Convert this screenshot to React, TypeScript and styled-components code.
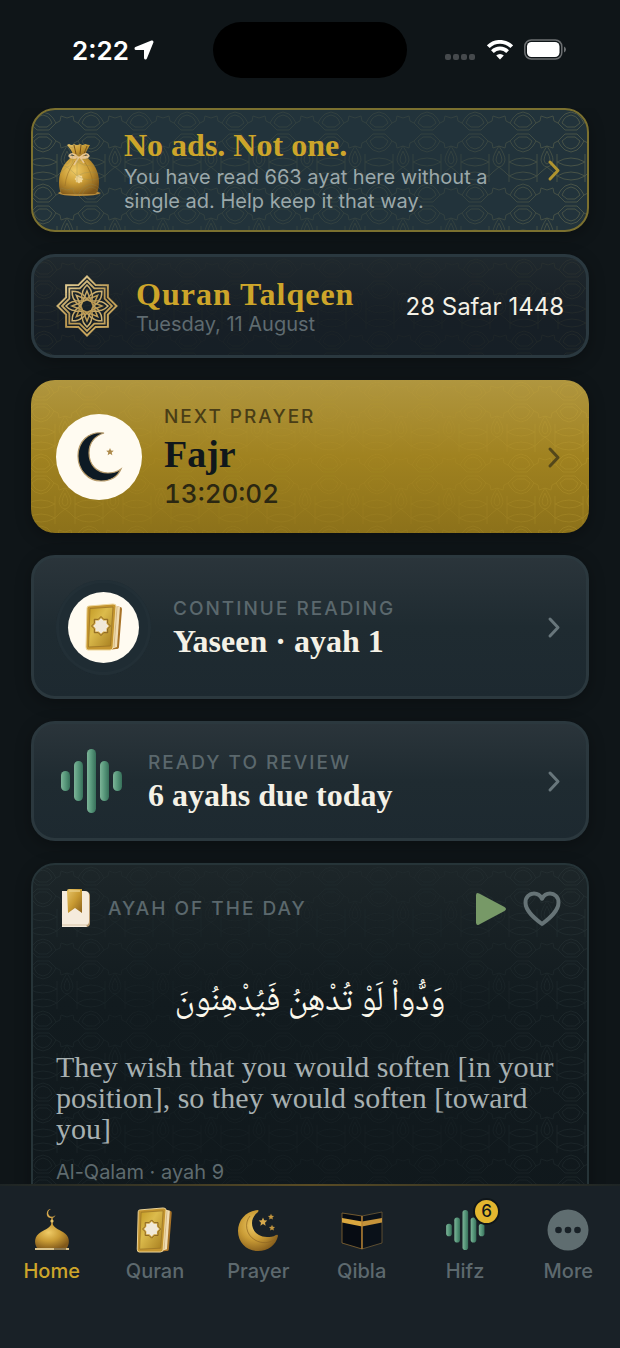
import React, { useId, useState } from 'react';
import styled, { createGlobalStyle } from 'styled-components';

const GlobalStyle = createGlobalStyle`
  * {
    box-sizing: border-box;
  }

  body {
    margin: 0;
    background: #0f1518;
    color: #f4f1e6;
    font-family: Inter, Roboto, sans-serif;
  }

  button {
    font: inherit;
    color: inherit;
    border: 0;
    padding: 0;
    background: none;
    cursor: pointer;
  }

  h1, h2, p {
    margin: 0;
  }
`;

const serif = '"Liberation Serif", "Times New Roman", serif';

const Screen = styled.div`
  display: flex;
  flex-direction: column;
  height: 100vh;
`;

const StatusBar = styled.header`
  display: grid;
  grid-template-columns: 1fr auto 1fr;
  align-items: center;
  padding: 22px 54px 30px;
  flex-shrink: 0;
`;

const Island = styled.div`
  width: 194px;
  height: 56px;
  border-radius: 28px;
  background: #000;
`;

const Clock = styled.div`
  display: flex;
  align-items: center;
  gap: 4px;
  padding-left: 18px;
  color: #fff;
  font-size: 26px;
  font-weight: 600;
`;

const StatusIcons = styled.div`
  display: flex;
  align-items: center;
  justify-content: flex-end;
  gap: 11px;
`;

const Feed = styled.main`
  flex: 1;
  min-height: 0;
  display: flex;
  flex-direction: column;
  gap: 22px;
  padding: 0 31px;
  overflow-y: auto;
  scrollbar-width: none;
`;

type Tone = 'promo' | 'brand' | 'gold' | 'slate' | 'verse';

const tones: Record<Tone, { border: number; line: string; fill: string }> = {
  promo: { border: 2, line: '#7b702f', fill: '#22333b' },
  brand: { border: 3, line: '#2a383f', fill: 'linear-gradient(#20292e, #171f26 60%, #161f26)' },
  gold: { border: 0, line: 'transparent', fill: 'linear-gradient(#b0963f, #a08220 50%, #8c711a)' },
  slate: { border: 3, line: '#2b383e', fill: 'linear-gradient(#2b353b, #1f2b31 50%, #1d2930)' },
  verse: { border: 2, line: '#263438', fill: 'linear-gradient(#1d2629, #121b1f 40%, #10181c)' },
};

const Card = styled.section<{ $tone: Tone; $height: number }>`
  position: relative;
  flex-shrink: 0;
  display: flex;
  align-items: center;
  min-height: ${(p) => p.$height}px;
  padding: 0 ${(p) => 25 - tones[p.$tone].border}px;
  border: ${(p) => tones[p.$tone].border}px solid ${(p) => tones[p.$tone].line};
  border-radius: 24px;
  background: ${(p) => tones[p.$tone].fill};
  background-origin: border-box;
  overflow: hidden;
  box-shadow: 0 4px 16px rgba(0, 0, 0, 0.3);
`;

const CardButton = styled(Card).attrs({ as: 'button' })`
  width: 100%;
  text-align: left;
`;

const VerseCard = styled(Card)`
  display: block;
  padding-top: 22px;
  padding-bottom: 24px;
`;

const PatternLayer = styled.svg<{ $strength: number }>`
  position: absolute;
  inset: 0;
  width: 100%;
  height: 100%;
  opacity: ${(p) => p.$strength};
  pointer-events: none;
  mask-image: linear-gradient(90deg, rgba(0, 0, 0, 0.9), rgba(0, 0, 0, 0.4) 20%, rgba(0, 0, 0, 0.4) 75%, #000);
`;

const Body = styled.div<{ $gap: number }>`
  position: relative;
  flex: 1;
  min-width: 0;
  margin-left: ${(p) => p.$gap}px;
`;

const Title = styled.h2<{ $gold?: boolean; $wide?: boolean }>`
  font-family: ${serif};
  font-size: 32px;
  line-height: 36px;
  font-weight: 700;
  color: ${(p) => (p.$gold ? '#cda52a' : '#f4f1e6')};
  letter-spacing: ${(p) => (p.$wide ? '1px' : 'normal')};
`;

const Text = styled.p`
  margin-top: 2px;
  font-size: 20px;
  line-height: 24px;
  color: #9ba8aa;
`;

const DateText = styled.p`
  font-size: 20px;
  line-height: 24px;
  color: #5f6b70;
`;

const HijriDate = styled.p`
  position: relative;
  font-size: 24px;
  color: #f4f1e6;
`;

const Label = styled.p<{ $dark?: boolean }>`
  font-size: 19px;
  line-height: 28px;
  font-weight: 500;
  letter-spacing: 2px;
  text-transform: uppercase;
  color: ${(p) => (p.$dark ? '#493d16' : '#5b686d')};
`;

const PrayerName = styled.h2`
  font-family: ${serif};
  font-size: 38px;
  line-height: 46px;
  color: #10171b;
`;

const Countdown = styled.p`
  font-size: 26px;
  line-height: 34px;
  font-weight: 500;
  color: #2b2712;
  font-variant-numeric: tabular-nums;
`;

const Disc = styled.div<{ $size: number }>`
  position: relative;
  display: flex;
  align-items: center;
  justify-content: center;
  width: ${(p) => p.$size}px;
  height: ${(p) => p.$size}px;
  border-radius: 50%;
  background: #fffbf1;
`;

const Ring = styled.div`
  padding: 12px;
  border-radius: 50%;
  background: #1f2c33;
  box-shadow: inset 0 0 0 3px #222f36;
`;

const VerseHeader = styled.div`
  position: relative;
  display: flex;
  align-items: center;
  height: 44px;

  p {
    flex: 1;
    margin-left: 14px;
  }
`;

const IconButton = styled.button`
  display: flex;
  align-items: center;
  justify-content: center;
  width: 44px;
  height: 44px;

  & + & {
    margin-left: 7px;
  }
`;

const Arabic = styled.p`
  position: relative;
  margin: 34px 0 10px;
  font-family: "Noto Naskh Arabic", Amiri, "Scheherazade New", "DejaVu Sans", sans-serif;
  font-size: 34px;
  line-height: 76px;
  text-align: center;
  color: #fbf8ec;
`;

const Translation = styled.p`
  position: relative;
  font-family: ${serif};
  font-size: 30px;
  line-height: 31px;
  color: #a7b0b1;
`;

const Source = styled.p`
  position: relative;
  margin-top: 16px;
  font-size: 20px;
  line-height: 24px;
  color: #5f6b6f;
`;

const TabBar = styled.nav`
  position: relative;
  flex-shrink: 0;
  display: grid;
  grid-template-columns: repeat(6, 1fr);
  min-height: 164px;
  padding-top: 22px;
  background: #192127;

  &::before {
    content: '';
    position: absolute;
    inset: 0 0 auto;
    height: 2px;
    background: linear-gradient(90deg, #1d2425, #5a4c24 50%, #1d2425);
  }
`;

const TabButton = styled.button<{ $active: boolean }>`
  display: flex;
  flex-direction: column;
  align-items: center;
  align-self: start;
  gap: 3px;
  font-size: 20px;
  line-height: 28px;
  font-weight: 500;
  color: ${(p) => (p.$active ? '#cda52a' : '#5d696e')};
`;

const TabIcon = styled.span`
  position: relative;
  display: flex;
  height: 48px;
  align-items: center;
`;

const Badge = styled.span`
  position: absolute;
  top: -8px;
  right: -13px;
  width: 27px;
  height: 27px;
  border: 2px solid #10161a;
  border-radius: 50%;
  background: #e3b62f;
  color: #10161a;
  font-size: 17px;
  line-height: 23px;
  text-align: center;
`;

// star outline that starts at the top and alternates outer and inner points
function starPoints(cx: number, cy: number, outer: number, inner: number, tips = 8) {
  return Array.from({ length: tips * 2 }, (_, i) => {
    const r = i % 2 === 0 ? outer : inner;
    const a = (Math.PI * i) / tips - Math.PI / 2;
    return `${(cx + r * Math.cos(a)).toFixed(2)},${(cy + r * Math.sin(a)).toFixed(2)}`;
  }).join(' ');
}

// eight points joined by every third one
function wovenStar(radius: number) {
  return Array.from({ length: 8 }, (_, i) => {
    const a = (Math.PI * 3 * i) / 4 - Math.PI / 2;
    return `${(radius * Math.cos(a)).toFixed(2)},${(radius * Math.sin(a)).toFixed(2)}`;
  }).join(' ');
}

function SharedDefs() {
  return (
    <svg width="0" height="0" style={{ position: 'absolute' }} aria-hidden="true">
      <defs>
        <linearGradient id="gold" x1="0" y1="0" x2="1" y2="1">
          <stop offset="0" stopColor="#e7c56b" />
          <stop offset="0.5" stopColor="#c89a32" />
          <stop offset="1" stopColor="#8b611c" />
        </linearGradient>
        <linearGradient id="cover" x1="0" y1="0" x2="1" y2="1">
          <stop offset="0" stopColor="#c39a24" />
          <stop offset="0.4" stopColor="#dcbb4c" />
          <stop offset="1" stopColor="#a67d1e" />
        </linearGradient>
        <linearGradient id="goldLine" gradientUnits="userSpaceOnUse" x1="-20" y1="-30" x2="20" y2="30">
          <stop offset="0" stopColor="#ecd9a2" />
          <stop offset="0.5" stopColor="#b8954f" />
          <stop offset="1" stopColor="#d2b066" />
        </linearGradient>
        <radialGradient id="goldBall" cx="0.4" cy="0.38" r="0.7">
          <stop offset="0" stopColor="#efcb66" />
          <stop offset="0.5" stopColor="#c99b35" />
          <stop offset="1" stopColor="#80581a" />
        </radialGradient>
        <linearGradient id="jade" x1="0" y1="0" x2="1" y2="0">
          <stop offset="0" stopColor="#7db498" />
          <stop offset="0.45" stopColor="#5a9a7d" />
          <stop offset="1" stopColor="#37705a" />
        </linearGradient>
      </defs>
    </svg>
  );
}

function Pattern({ color, strength }: { color: string; strength: number }) {
  const id = useId();

  return (
    <PatternLayer $strength={strength} aria-hidden="true">
      <defs>
        <pattern id={id} x="-14" width="48" height="72" patternUnits="userSpaceOnUse">
          <g fill="none" stroke={color} strokeWidth="1">
            <path d="M24 2Q31 3 34 8L37 13 30 20H18L11 13 14 8Q17 3 24 2ZM24 42Q31 41 34 36L37 31 30 24H18L11 31 14 36Q17 41 24 42Z" />
            <path d="M24 5Q29 6 31 9L33 13 28 17H20L15 13 17 9Q19 6 24 5ZM24 39Q29 38 31 35L33 31 28 27H20L15 31 17 35Q19 38 24 39Z" />
            <path d="M0 36Q6 45 6 50 5 56 0 57-5 56-6 50-6 45 0 36ZM48 36Q54 45 54 50 53 56 48 57 43 56 42 50 42 45 48 36Z" />
            <path d="M0 41Q3 47 3 50 2 54 0 54M48 41Q45 47 45 50 46 54 48 54" />
            <path d="M10 52Q24 44 38 52 24 60 10 52ZM10 66Q24 58 38 66 24 74 10 66Z" />
            <path d="M11 13 7 11 6 6 0 8M37 13 41 11 42 6 48 8M11 31 7 33 6 38 0 36M37 31 41 33 42 38 48 36" />
            <path d="M10 44V72M38 44V72M0 57 6 62 10 66M48 57 42 62 38 66" />
          </g>
        </pattern>
      </defs>
      <rect width="100%" height="100%" fill={`url(#${id})`} />
    </PatternLayer>
  );
}

const ChevronIcon = styled.svg`
  position: relative;
  flex-shrink: 0;
`;

function Chevron({ color }: { color: string }) {
  return (
    <ChevronIcon width="24" height="24" viewBox="0 0 24 24" fill="none" stroke={color} strokeWidth="3" strokeLinecap="round" strokeLinejoin="round">
      <path d="M10 4l8 8.500-8 8.500" />
    </ChevronIcon>
  );
}

function PouchIcon() {
  return (
    <svg width="46" height="56" viewBox="0 0 46 56">
      <path d="M2 51q4-2 6-4h30q3 3 7 4-4 3-22 3T2 51Z" fill="#b88a39" />
      <path d="M13 2q3 2 5 0 3 2 6 0 3 2 5 0 3 1 5 1-4 6-5 11H18Q15 7 11 3Z" fill="url(#gold)" />
      <path d="M17 14h12c9 6 14 16 14 26 0 8-2 11-4 12H7c-3-1-4-5-4-12 0-10 5-20 14-26Z" fill="url(#goldBall)" />
      <path d="M18 3l2 9M25 3l-1 9M31 4l-3 8" stroke="#7a5218" strokeWidth="1" />
      <path d="M19 19Q10 31 9 44M28 19q8 11 9 23" stroke="#9b7226" strokeWidth="1" fill="none" opacity="0.6" />
      <path d="M14 14q9 3 18 0M22 15q-7-6-9-1 2 4 9 1Zm2 0q7-6 9-1-2 4-9 1ZM23 15l-5 8M24 15l4 6" stroke="#e9c794" strokeWidth="1.500" fill="none" />
      <polygon points={starPoints(23, 37, 4.5, 3.4)} fill="#f3d794" />
    </svg>
  );
}

function RosetteIcon() {
  return (
    <svg width="62" height="62" viewBox="-31 -31 62 62" fill="none" stroke="url(#goldLine)">
      <polygon points={starPoints(0, 0, 29.5, 22.6)} strokeWidth="2" />
      <polygon points={starPoints(0, 0, 25, 19.1)} strokeWidth="1.800" />
      <polygon points={wovenStar(15)} strokeWidth="1.500" />
      {[0, 45, 90, 135, 180, 225, 270, 315].map((a) => (
        <path key={a} transform={`rotate(${a})`} strokeWidth="1.500" d="M0-21Q5-16 4.500-12L0-7-4.500-12Q-5-16 0-21Z" />
      ))}
    </svg>
  );
}

function CrescentIcon() {
  return (
    <svg width="50" height="54" viewBox="0 0 50 54">
      <path d="M30 3C14 1 4 12 4 26c0 14 10 25 23 25 10 0 17-5 20-12-4 3-9 4-13 4C23 43 15 35 15 23 15 13 21 6 30 3Z" fill="#0d1a24" stroke="#b79b6b" strokeWidth="1.200" />
      <polygon points={starPoints(36, 22, 4, 1.8, 5)} fill="#ad8a4b" />
    </svg>
  );
}

function BookIcon({ width, height }: { width: number; height: number }) {
  return (
    <svg width={width} height={height} viewBox="0 0 38 48">
      <path d="M28 2l7 2q2 0 2 2l-3 38q0 2-3 2l-8 1Z" fill="#a87328" />
      <path d="M28 2l7 2-3 40-6 2Z" fill="#f0ddb4" />
      <path d="M32 4l-3 40" stroke="#c7a670" strokeWidth="0.700" />
      <path d="M4 3L28 1q3 0 3 2l-3 41q0 3-3 3L3 47q-2 0-2-3L2 5q0-2 2-2Z" fill="#c4952f" stroke="#efd79c" strokeWidth="1" />
      <path d="M5 5.500L28 4 25.500 43 3.500 44Z" fill="url(#cover)" stroke="#9a7426" strokeWidth="0.800" />
      <polygon points={starPoints(16, 23, 9.5, 7.2)} fill="#d3a945" stroke="#8a6420" strokeWidth="1" />
      <polygon points={starPoints(16, 23, 7.8, 6)} fill="#f1e9d8" />
    </svg>
  );
}

const bars = [
  { x: 2, h: 20 },
  { x: 15, h: 40 },
  { x: 28, h: 64 },
  { x: 41, h: 40 },
  { x: 54, h: 20 },
];

function WaveIcon({ size }: { size: number }) {
  return (
    <svg width={size} height={size} viewBox="-3 -2 70 70">
      {bars.map((b) => (
        <rect key={b.x} x={b.x} y={33 - b.h / 2} width="9" height={b.h} rx="4.500" fill="url(#jade)" />
      ))}
    </svg>
  );
}

function BookmarkIcon() {
  return (
    <svg width="38" height="44" viewBox="0 0 38 44">
      <path d="M8 5h22q4 0 4 4v27q0 4-4 4H7Z" fill="#b99a70" />
      <path d="M6 4h23q4 0 4 4v26q0 4-3 4l1 2H6Z" fill="#f5ebdc" />
      <path d="M6 38h25" stroke="#d8c5a8" strokeWidth="1" />
      <path d="M11 4q0-2 2-2h13v24l-7-5-7 5Z" fill="url(#gold)" />
      <path d="M13 4h11" stroke="#e9cd82" strokeWidth="1.500" />
    </svg>
  );
}

function DomeIcon() {
  return (
    <svg width="36" height="44" viewBox="0 0 36 44">
      <path d="M17 1a4.500 4.500 0 1 0 4.500 6 4 4 0 1 1-4.500-6Z" fill="#d6a94d" />
      <path d="M18 9v8" stroke="#c99b42" strokeWidth="1.500" />
      <circle cx="18" cy="13" r="1.600" fill="#e7c56b" />
      <path d="M18 15c2 5 6 6 11 9 7 4 7 11 4 16H3c-3-5-3-12 4-16 5-3 9-4 11-9Z" fill="url(#goldBall)" />
      <path d="M1 40h34v2H1Z" fill="#d9c28c" />
      <path d="M20 41h12" stroke="#3b2c15" strokeWidth="1" />
    </svg>
  );
}

function MoonIcon() {
  return (
    <svg width="42" height="44" viewBox="0 0 42 44">
      <path d="M21 2C9 3 1 12 1 23c0 12 9 20 20 20 10 0 18-6 20-15q0-2-2-1c-3 2-6 2-9 2C20 29 15 22 15 15c0-4 2-8 6-11Q22 2 21 2Z" fill="url(#goldBall)" />
      <path d="M13 8C7 15 9 27 18 32c7 4 14 3 19 0" stroke="#8f6522" strokeWidth="1" fill="none" opacity="0.7" />
      <polygon points={starPoints(26, 14, 4.5, 2.1, 5)} fill="#d6a94d" />
      <polygon points={starPoints(34, 9, 3.2, 1.5, 5)} fill="#c4963e" />
      <polygon points={starPoints(35, 20, 3.2, 1.5, 5)} fill="#c4963e" />
    </svg>
  );
}

function KaabaIcon() {
  return (
    <svg width="44" height="40" viewBox="0 0 44 40" strokeLinejoin="round">
      <path d="M2 3l20 3v33L2 33Z" fill="#070c13" stroke="#8a6a33" strokeWidth="0.800" />
      <path d="M22 6l20-4v31l-20 6Z" fill="#0a1119" stroke="#6f5a35" strokeWidth="0.800" />
      <path d="M2 8l20 3.500v5L2 12.500Z" fill="#dba83f" />
      <path d="M22 11.500L42 8v4.500l-20 4Z" fill="#c5933a" />
      <path d="M22 6v33" stroke="#b98232" strokeWidth="1.300" />
    </svg>
  );
}

function MoreIcon() {
  return (
    <svg width="42" height="42" viewBox="0 0 42 42">
      <circle cx="21" cy="21" r="20.500" fill="#5f6d70" />
      <g fill="#192127">
        <circle cx="11.500" cy="21" r="3.300" />
        <circle cx="21" cy="21" r="3.300" />
        <circle cx="30.500" cy="21" r="3.300" />
      </g>
    </svg>
  );
}

const tabs = [
  { name: 'Home', icon: <DomeIcon /> },
  { name: 'Quran', icon: <BookIcon width={37} height={46} /> },
  { name: 'Prayer', icon: <MoonIcon /> },
  { name: 'Qibla', icon: <KaabaIcon /> },
  { name: 'Hifz', icon: <WaveIcon size={44} />, badge: 6 },
  { name: 'More', icon: <MoreIcon /> },
];

function App() {
  const [tab, setTab] = useState('Home');
  const [liked, setLiked] = useState(false);

  return (
    <Screen>
      <GlobalStyle />
      <SharedDefs />

      <StatusBar>
        <Clock>
          2:22
          <svg width="22" height="22" viewBox="0 0 22 22" fill="#fff" stroke="#fff" strokeWidth="3" strokeLinejoin="round">
            <path d="M19 3L12.500 19V10.500Q12.500 9.500 11.500 9.500H3Z" />
          </svg>
        </Clock>
        <Island />
        <StatusIcons>
          <svg width="31" height="20" viewBox="0 0 31 20" fill="#45494c">
            <rect y="14" width="6" height="6" rx="2" />
            <rect x="8" y="14" width="6" height="6" rx="2" />
            <rect x="16" y="14" width="6" height="6" rx="2" />
            <rect x="24" y="14" width="6" height="6" rx="2" />
          </svg>
          <svg width="26" height="20" viewBox="0 0 26 20" fill="none" stroke="#fff" strokeWidth="3.800">
            <path d="M1.300 6.700a16.500 16.500 0 0 1 23.400 0" />
            <path d="M5.400 11.600a10.700 10.700 0 0 1 15.200 0" />
            <path d="M13 19.500l-3.800-3.900a5.400 5.400 0 0 1 7.600 0Z" fill="#fff" stroke="none" />
          </svg>
          <svg width="42" height="22" viewBox="0 0 42 22">
            <rect x="0.800" y="1" width="37" height="19" rx="6.500" fill="none" stroke="#6d7072" strokeWidth="1.500" />
            <rect x="3" y="3" width="32.500" height="15" rx="4.500" fill="#fff" />
            <path d="M40 7.500q2 1 2 3t-2 3Z" fill="#6d7072" />
          </svg>
        </StatusIcons>
      </StatusBar>

      <Feed>
        <CardButton $tone="promo" $height={124}>
          <Pattern color="#8b8a5c" strength={0.4} />
          <PouchIcon />
          <Body $gap={22}>
            <Title $gold>No ads. Not one.</Title>
            <Text>You have read 663 ayat here without a single ad. Help keep it that way.</Text>
          </Body>
          <Chevron color="#b0942f" />
        </CardButton>

        <Card $tone="brand" $height={104}>
          <Pattern color="#6d6a45" strength={0.14} />
          <RosetteIcon />
          <Body $gap={18}>
            <Title as="h1" $gold $wide>Quran Talqeen</Title>
            <DateText>Tuesday, 11 August</DateText>
          </Body>
          <HijriDate>28 Safar 1448</HijriDate>
        </Card>

        <CardButton $tone="gold" $height={153}>
          <Pattern color="#d6b545" strength={0.2} />
          <Disc $size={86}>
            <CrescentIcon />
          </Disc>
          <Body $gap={22}>
            <Label $dark>Next prayer</Label>
            <PrayerName>Fajr</PrayerName>
            <Countdown>13:20:02</Countdown>
          </Body>
          <Chevron color="#54471a" />
        </CardButton>

        <CardButton $tone="slate" $height={144}>
          <Ring>
            <Disc $size={71}>
              <BookIcon width={38} height={50} />
            </Disc>
          </Ring>
          <Body $gap={22}>
            <Label>Continue reading</Label>
            <Title>Yaseen · ayah 1</Title>
          </Body>
          <Chevron color="#68767b" />
        </CardButton>

        <CardButton $tone="slate" $height={120}>
          <WaveIcon size={70} />
          <Body $gap={22}>
            <Label>Ready to review</Label>
            <Title>6 ayahs due today</Title>
          </Body>
          <Chevron color="#68767b" />
        </CardButton>

        <VerseCard $tone="verse" $height={340}>
          <Pattern color="#6b8080" strength={0.12} />
          <VerseHeader>
            <BookmarkIcon />
            <Label>Ayah of the day</Label>
            <IconButton aria-label="Play ayah">
              <svg width="32" height="34" viewBox="0 0 32 34" fill="#779967">
                <path d="M1 3.500Q1 0 4.200 1.600L29.500 15Q32.500 17 29.500 19L4.200 32.400Q1 34 1 30.500Z" />
              </svg>
            </IconButton>
            <IconButton aria-label="Save ayah" aria-pressed={liked} onClick={() => setLiked(!liked)}>
              <svg width="38" height="36" viewBox="0 0 38 36" fill={liked ? '#667376' : 'none'} stroke="#667376" strokeWidth="4" strokeLinejoin="round">
                <path d="M19 33C11 27 2.500 20 2.500 11.500 2.500 6 6.500 2.500 11 2.500c3.500 0 6.300 2 8 5.200 1.700-3.200 4.500-5.200 8-5.200 4.500 0 8.500 3.500 8.500 9C35.500 20 27 27 19 33Z" />
              </svg>
            </IconButton>
          </VerseHeader>
          <Arabic lang="ar" dir="rtl">وَدُّواْ لَوْ تُدْهِنُ فَيُدْهِنُونَ</Arabic>
          <Translation>
            They wish that you would soften [in your position], so they would soften [toward you]
          </Translation>
          <Source>Al-Qalam · ayah 9</Source>
        </VerseCard>
      </Feed>

      <TabBar>
        {tabs.map((t) => (
          <TabButton key={t.name} $active={tab === t.name} onClick={() => setTab(t.name)}>
            <TabIcon>
              {t.icon}
              {t.badge && <Badge>{t.badge}</Badge>}
            </TabIcon>
            {t.name}
          </TabButton>
        ))}
      </TabBar>
    </Screen>
  );
}

export default App;
